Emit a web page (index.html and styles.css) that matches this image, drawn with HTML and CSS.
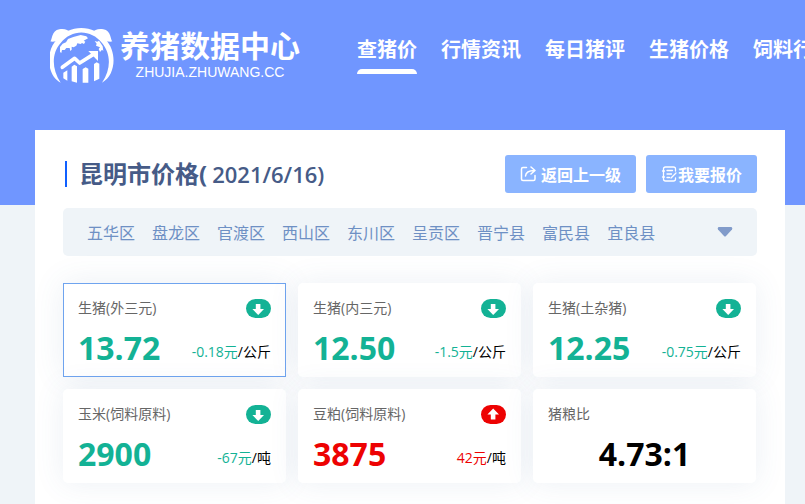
FILE: index.html
```html
<!DOCTYPE html>
<html lang="zh-CN">
<head>
<meta charset="utf-8">
<meta name="viewport" content="width=device-width, initial-scale=1">
<title>养猪数据中心</title>
<link rel="stylesheet" href="styles.css">
</head>
<body>
<svg class="sprite" aria-hidden="true">
  <symbol id="arrow-down" viewBox="0 0 25 19">
    <rect width="25" height="19" rx="9.5"/>
    <path fill="#fff" d="M9.800 5h4.600v5H18l-5.800 6L6.400 10h3.400z"/>
  </symbol>
  <symbol id="arrow-up" viewBox="0 0 25 19">
    <rect width="25" height="19" rx="9.5"/>
    <path fill="#fff" d="M9.800 14.500h4.600v-5H18l-5.800-6L6.400 9.500h3.400z"/>
  </symbol>
</svg>
<header class="header">
  <a class="logo" href="#">
    <svg class="logo-mark" viewBox="30 36 192 168" fill="#fff" aria-hidden="true">
      <path d="M62 203C20 181 16 109 50 74C85 27 163 27 197 74C232 109 228 181 186 203C215 160 212 115 186 84C153 42 95 42 62 84C35 114 34 161 62 203Z"/>
      <path d="M31 79C37 75 34 47 58 43C75 40 84 46 91 52C72 59 60 67 52 79C47 77 39 82 31 79Z"/>
      <path d="M217 79C211 75 214 47 190 43C173 40 164 46 157 52C176 59 188 67 196 79C201 77 209 82 217 79Z"/>
      <path d="M60 111L60 96L68 86L78 82L84 72L100 66L122 60L139 64L144 70L131 77L136 80L132 87L126 84L122 87L112 85L109 92L101 97L95 95L95 104L91 108L89 99L79 99L74 105L66 105L64 114Z"/>
      <path d="M164 78L172 80L177 77L188 94L190 108L186 104L180 111L176 102L180 97L168 92L170 86Z"/>
      <path d="M67 157L104 130L119 144L160 118" fill="none" stroke="#fff" stroke-width="11" stroke-linecap="round" stroke-linejoin="round"/>
      <path d="M145 108H174V138Z"/>
      <path d="M70 173L82 166V197L70 190ZM95 155L103 149L111 154V203L95 199ZM128 162L137 157L145 161V203H128ZM162 147L170 142L178 146V191L162 199Z"/>
    </svg>
    <span class="logo-text">
      <strong class="logo-name">养猪数据中心</strong>
      <span class="logo-url">ZHUJIA.ZHUWANG.CC</span>
    </span>
  </a>
  <nav class="nav">
    <a class="active" href="#">查猪价</a>
    <a href="#">行情资讯</a>
    <a href="#">每日猪评</a>
    <a href="#">生猪价格</a>
    <a href="#">饲料行情</a>
  </nav>
</header>
<main class="panel">
  <div class="panel-head">
    <h1>昆明市价格( <span class="date">2021/6/16)</span></h1>
    <div class="actions">
      <button class="btn btn-back" type="button">
        <svg class="btn-icon" viewBox="0 0 16 16" fill="none" stroke="#fff" stroke-width="1.500" stroke-linecap="round" stroke-linejoin="round" aria-hidden="true"><path d="M6 1.500H2.500Q1 1.500 1 3V13Q1 14.500 2.500 14.500H13Q14.500 14.500 14.500 13V9.500M5 10Q5.500 4.500 14 4.500M10.500 1L14.500 4.500L10.500 8"/></svg>返回上一级
      </button>
      <button class="btn" type="button">
        <svg class="btn-icon" viewBox="0 0 16 16" fill="none" stroke="#fff" stroke-width="1.300" stroke-linecap="round" stroke-linejoin="round" aria-hidden="true"><path d="M14 5V3Q14 1 12 1H4Q2 1 2 3V13Q2 15 4 15H12Q14 15 14 13V12M1 5H3M1 11H3M5.500 4.500H11M5.500 8H10M5.500 11.500H8M9.500 12L14.500 7"/></svg>我要报价
      </button>
    </div>
  </div>
  <div class="districts">
    <nav class="district-list">
      <a href="#">五华区</a>
      <a href="#">盘龙区</a>
      <a href="#">官渡区</a>
      <a href="#">西山区</a>
      <a href="#">东川区</a>
      <a href="#">呈贡区</a>
      <a href="#">晋宁县</a>
      <a href="#">富民县</a>
      <a href="#">宜良县</a>
    </nav>
    <button class="expand" type="button" aria-label="展开">
      <svg viewBox="0 0 16 10" aria-hidden="true"><path d="M1.500 0H14.500Q16 1 15 2.500L9 9Q8 10 7 9L1 2.500Q0 1 1.500 0Z"/></svg>
    </button>
  </div>
  <section class="cards">
    <article class="card down selected">
      <div class="row"><h2>生猪(外三元)</h2><svg class="trend" aria-hidden="true"><use href="#arrow-down"/></svg></div>
      <div class="row"><strong class="price">13.72</strong><span class="unit"><span class="change">-0.18元</span>/公斤</span></div>
    </article>
    <article class="card down">
      <div class="row"><h2>生猪(内三元)</h2><svg class="trend" aria-hidden="true"><use href="#arrow-down"/></svg></div>
      <div class="row"><strong class="price">12.50</strong><span class="unit"><span class="change">-1.5元</span>/公斤</span></div>
    </article>
    <article class="card down">
      <div class="row"><h2>生猪(土杂猪)</h2><svg class="trend" aria-hidden="true"><use href="#arrow-down"/></svg></div>
      <div class="row"><strong class="price">12.25</strong><span class="unit"><span class="change">-0.75元</span>/公斤</span></div>
    </article>
    <article class="card down">
      <div class="row"><h2>玉米(饲料原料)</h2><svg class="trend" aria-hidden="true"><use href="#arrow-down"/></svg></div>
      <div class="row"><strong class="price">2900</strong><span class="unit"><span class="change">-67元</span>/吨</span></div>
    </article>
    <article class="card up">
      <div class="row"><h2>豆粕(饲料原料)</h2><svg class="trend" aria-hidden="true"><use href="#arrow-up"/></svg></div>
      <div class="row"><strong class="price">3875</strong><span class="unit"><span class="change">42元</span>/吨</span></div>
    </article>
    <article class="card ratio">
      <div class="row"><h2>猪粮比</h2></div>
      <div class="row"><strong class="price">4.73:1</strong></div>
    </article>
  </section>
</main>
</body>
</html>
```
FILE: styles.css
```css
* {
  box-sizing: border-box;
}

body {
  margin: 0;
  min-height: 100vh;
  overflow-x: hidden;
  background: #eff4f8;
  color: #000;
  font-family: "Open Sans", "Noto Sans CJK SC", sans-serif;
}

a {
  color: inherit;
  text-decoration: none;
}

h1,
h2 {
  margin: 0;
}

button {
  border: 0;
  font-family: inherit;
  cursor: pointer;
}

.sprite {
  display: none;
}

.header {
  display: flex;
  align-items: flex-start;
  gap: 57px;
  height: 205px;
  padding: 27px 0 0 50px;
  overflow: hidden;
  background: #7096ff;
  color: #fff;
}

.logo {
  display: flex;
  flex: none;
  gap: 6px;
}

.logo-mark {
  width: 64px;
  height: 56px;
}

.logo-text {
  display: flex;
  flex-direction: column;
  align-items: center;
  width: 180px;
  padding-top: 2px;
  font-family: "Liberation Sans", "Noto Sans CJK SC", sans-serif;
}

.logo-name {
  font-size: 30px;
  line-height: 36px;
  white-space: nowrap;
}

.logo-url {
  font-size: 14px;
  line-height: 14px;
}

.nav {
  display: flex;
  flex: none;
  gap: 24px;
  font-size: 20px;
  font-weight: 700;
  line-height: 38px;
}

.nav a {
  padding-top: 4px;
  white-space: nowrap;
}

.nav .active::after {
  display: block;
  height: 5px;
  border-radius: 5px 5px 0 0;
  background: #fff;
  content: "";
}

.panel {
  min-height: calc(100vh - 130px);
  margin: -75px 20px 0 35px;
  padding: 25px 28px 21px;
  background: #fff;
}

.panel-head {
  display: flex;
  align-items: center;
  justify-content: space-between;
}

h1 {
  display: flex;
  align-items: center;
  gap: 5px;
  color: #465b87;
  font-size: 24px;
  line-height: 36px;
}

h1::before {
  width: 2px;
  height: 26px;
  margin: 0 7px 0 2px;
  background: #1060ff;
  content: "";
}

.date {
  font-size: 22px;
  font-weight: 600;
}

.actions {
  display: flex;
  gap: 10px;
}

.btn {
  display: flex;
  align-items: center;
  height: 38px;
  padding: 0 15px;
  border-radius: 3px;
  background: #8ab4ff;
  color: #fff;
  font-size: 16px;
  font-weight: 700;
}

.btn-back {
  gap: 4px;
}

.btn-icon {
  width: 17px;
  height: 16px;
}

.districts {
  display: flex;
  align-items: center;
  justify-content: space-between;
  height: 48px;
  margin-top: 15px;
  padding: 0 24px;
  border-radius: 5px;
  background: #eff4f8;
  color: #6e90c4;
}

.district-list {
  display: flex;
  gap: 17px;
  font-size: 16px;
  white-space: nowrap;
}

.expand {
  display: flex;
  padding: 0;
  background: none;
}

.expand svg {
  width: 16px;
  height: 10px;
  fill: #819bca;
}

.cards {
  display: grid;
  grid-template-columns: repeat(3, 1fr);
  gap: 12px;
  margin-top: 27px;
  padding-right: 1px;
}

.card {
  height: 94px;
  padding: 14px;
  border: 1px solid transparent;
  border-radius: 5px;
  background: #fff;
  box-shadow: 0 0 30px rgba(70, 105, 160, 0.1);
}

.selected {
  border-color: #6fa4ef;
  border-radius: 0;
}

.row {
  display: flex;
  align-items: center;
  justify-content: space-between;
}

h2 {
  color: #666;
  font-size: 14px;
  font-weight: 400;
  line-height: 20px;
}

.trend {
  width: 25px;
  height: 19px;
}

.price {
  font-size: 32px;
  line-height: 60px;
}

.unit {
  padding-top: 6px;
  font-size: 14px;
}

.down .price,
.down .change {
  color: #13b295;
}

.up .price,
.up .change {
  color: #ed0202;
}

.down .trend {
  fill: #13b295;
}

.up .trend {
  fill: #ed0202;
}

.ratio .row + .row {
  justify-content: center;
}
```
